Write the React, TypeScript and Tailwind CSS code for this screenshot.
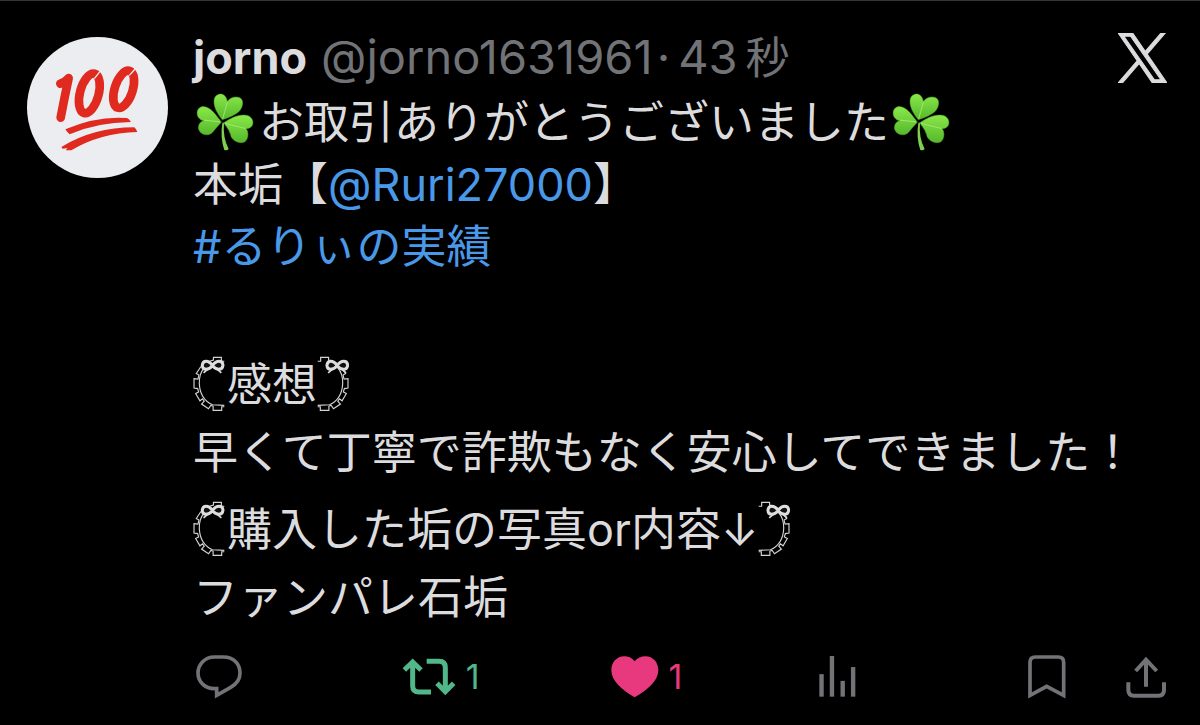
import React from 'react';

function HundredAvatar() {
  return (
    <svg viewBox="81 111 423 423" className="w-full" role="img" aria-label="💯">
      <g fill="none" stroke="#e0291f" strokeLinejoin="round">
        <path d="M181 251 Q195 247 206 234 Q194 290 182 353" strokeWidth="26" strokeLinecap="round" />
        <ellipse cx="268" cy="280" rx="28" ry="61" strokeWidth="26" transform="rotate(15 268 280)" />
        <ellipse cx="371" cy="268" rx="27" ry="58" strokeWidth="26" transform="rotate(18 371 268)" />
      </g>
      <g stroke="#ecedf1" strokeWidth="4" fill="none">
        <path d="M283 236 L302 212" />
        <path d="M388 226 L408 204" />
      </g>
      <g fill="#e0291f">
        <path d="M196 388 Q290 347 381 354 Q388 357 393 366 Q290 367 209 403 Q202 398 196 388Z" />
        <path d="M184 441 Q280 382 403 382 Q409 387 412 396 Q300 399 214 451 L198 451 Q198 446 203 444 L188 446Z" />
      </g>
    </svg>
  );
}

function Clover() {
  return (
    <svg viewBox="588 280 174 175" className="inline-block w-[58px] h-[58px] ml-[3px] mr-[5px] align-[-12px]" role="img" aria-label="☘️">
      <defs>
        <linearGradient id="leaf" x1="0" y1="0" x2="0" y2="1">
          <stop offset="0" stopColor="#8ae84a" />
          <stop offset="1" stopColor="#56b82b" />
        </linearGradient>
      </defs>
      <path d="M667 370 Q660 415 673 452 Q681 455 686 449 Q668 415 672 370Z" fill="#7fd052" />
      <g fill="url(#leaf)" stroke="#4da32a" strokeWidth="1.5">
        <path d="M667 361 C655 345 640 325 642 302 C644 283 664 278 674 288 Q681 295 682 305 C692 292 710 289 721 295 C733 302 729 325 716 337 Q700 350 667 361Z" />
        <path d="M664 368 C648 346 630 320 608 321 C590 323 586 345 597 356 Q602 362 610 364 C598 367 592 380 596 391 C603 409 627 410 637 399 Q650 383 664 368Z" />
        <path d="M671 370 C690 358 712 344 738 347 C757 349 764 368 756 380 Q748 389 739 388 C747 398 746 419 735 427 C721 434 702 427 694 413 Q690 393 671 370Z" />
      </g>
      <g stroke="#a9ee78" strokeWidth="3" fill="none" opacity="0.8">
        <path d="M668 358 L682 308" />
        <path d="M660 367 L612 362" />
        <path d="M675 372 L737 387" />
      </g>
    </svg>
  );
}

function RibbonBracket({ side }: { side: 'left' | 'right' }) {
  const right = side === 'right';
  return (
    <svg viewBox="40 48 97 170" className="inline-block w-[32px] h-[56px] mr-[2px] align-[-11px]" aria-hidden="true">
      <g fill="none" stroke="#d4d4d6" strokeWidth="3.5" transform={right ? 'translate(177 0) scale(-1 1)' : undefined}>
        <path d="M135 64 H126 V52 H102 V60 L83 66 L70 75 M64 80 L50 101 L58 106 L55 118 L43 117 V145 L54 147 L57 157 L48 162 L61 184 L69 178 L74 185 L66 194 L87 208 L94 198 L101 200 V213 H127 V202 H135" />
        <path d="M135 198 L99 196 C72 184 60 160 59 130 C59 108 65 94 74 84" />
      </g>
      <g transform={right ? 'translate(2 0)' : undefined}>
        <path d="M99 77 C87 59 70 60 68 76 C69 93 87 92 99 77 C111 59 130 60 131 76 C129 93 111 92 99 77Z" fill="#111111" stroke="#dedee0" strokeWidth="9" />
        <path d="M92 82 L72 99 M106 82 L126 99" stroke="#dedee0" strokeWidth="5" />
      </g>
    </svg>
  );
}

function XLogo() {
  return (
    <svg viewBox="0 0 1200 1227" className="w-[49px] h-[50px]" fill="#dcdcde" stroke="#dcdcde" strokeWidth="26" role="img" aria-label="X">
      <path d="M714.163 519.284L1160.89 0H1055.03L667.137 450.887L357.328 0H0L468.492 681.821L0 1226.37H105.866L515.491 750.218L842.672 1226.37H1200L714.137 519.284H714.163ZM569.165 687.828L521.697 619.934L144.011 79.6944H306.615L611.412 515.685L658.88 583.579L1055.08 1150.3H892.476L569.165 687.854V687.828Z" />
    </svg>
  );
}

function ReplyIcon() {
  return (
    <svg viewBox="48 44 138 132" className="w-[46px] h-[44px]" fill="none" stroke="currentColor" strokeWidth="11">
      <path d="M103 50 H131 C160 50 180 70 180 98 C180 118 168 132 152 141 L110 165 V145 H103 C75 145 54 124 54 98 S75 50 103 50Z" />
    </svg>
  );
}

function RetweetIcon() {
  return (
    <svg viewBox="657 55 162 114" className="w-[54px] h-[38px]" fill="none" stroke="currentColor" strokeWidth="15">
      <path d="M664 91 L689 67 L714 91 M689 68 V138 Q689 157 708 157 H744" />
      <path d="M731 65 H768 Q787 65 787 84 V155 M762 131 L787 156 L812 131" />
    </svg>
  );
}

function HeartIcon() {
  return (
    <svg viewBox="87 50 144 126" className="w-[48px] h-[42px]" fill="currentColor">
      <path d="M158 66 C150 55 138 51 127 51 C104 51 88 70 88 92 C88 125 120 152 158 174 C196 152 229 125 229 92 C229 70 213 51 190 51 C178 51 166 56 158 66Z" />
    </svg>
  );
}

function StatsIcon() {
  return (
    <svg viewBox="726 51 108 122" className="w-[37px] h-[41px]" fill="currentColor">
      <rect x="726" y="105" width="13" height="67" />
      <rect x="757" y="51" width="13" height="121" />
      <rect x="789" y="125" width="13" height="47" />
      <rect x="820" y="84" width="13" height="88" />
    </svg>
  );
}

function BookmarkIcon() {
  return (
    <svg viewBox="84 44 114 132" className="w-[38px] h-[44px]" fill="none" stroke="currentColor" strokeWidth="11">
      <path d="M90 165 V66 Q90 50 106 50 H175 Q191 50 191 66 V165 L140 138Z" />
    </svg>
  );
}

function ShareIcon() {
  return (
    <svg viewBox="378 46 123 126" className="w-[41px] h-[42px]" fill="none" stroke="currentColor" strokeWidth="12">
      <path d="M385 125 V148 Q385 165 402 165 H475 Q492 165 492 148 V125" />
      <path d="M438 138 V56 M407 91 L438 57 L470 91" />
    </svg>
  );
}

export default function App() {
  return (
    <div className="min-h-screen bg-black border-t border-[#333639] text-[#dcdcde] font-['Inter','Noto_Sans_CJK_JP',sans-serif]">
      <article lang="ja" className="flex gap-[25px] pl-[27px] pr-[33px] pt-[26px]">
        <div className="w-[141px] h-[141px] mt-[10px] shrink-0 rounded-full overflow-hidden bg-[#ecedf1]">
          <HundredAvatar />
        </div>

        <div className="flex-1 min-w-0">
          <header className="flex items-start justify-between h-[65px]">
            <div className="flex items-baseline text-[47px] leading-[60px] whitespace-nowrap text-[#717376]">
              <span className="text-[45px] font-bold text-[#dcdcde]">jorno</span>
              <span className="ml-[14px]">@jorno1631961</span>
              <span className="ml-1 mr-2">·</span>
              <time>
                43<span className="ml-2 text-[44px]">秒</span>
              </time>
            </div>
            <a href="#" aria-label="X" className="mt-[6px]">
              <XLogo />
            </a>
          </header>

          <div className="text-[45px] leading-[62px] whitespace-nowrap">
            <p className="h-[62px]">
              <Clover />
              お取引ありがとうございました
              <Clover />
            </p>
            <p>
              本垢【<a href="#" className="text-[#4a99e9]">@Ruri27000</a>】
            </p>
            <p className="mb-[61px]">
              <a href="#" className="text-[#4a99e9]">#るりぃの実績</a>
            </p>
            <p className="h-[83px] pt-[15px]">
              <RibbonBracket side="left" />感想<RibbonBracket side="right" />
            </p>
            <p>早くて丁寧で詐欺もなく安心してできました！</p>
            <p className="h-[83px] pt-[15px]">
              <RibbonBracket side="left" />購入した垢の写真or内容↓<RibbonBracket side="right" />
            </p>
            <p>ファンパレ石垢</p>
          </div>

          <footer className="grid grid-cols-[repeat(4,1fr)_auto] items-center mt-[22px] h-[50px] text-[34px] text-[#717376]">
            <button className="flex items-center pl-[3px]" aria-label="Reply">
              <ReplyIcon />
            </button>
            <button className="flex items-center gap-[10px] text-[#52b788]" aria-label="Repost">
              <RetweetIcon />
              <span>1</span>
            </button>
            <button className="flex items-center gap-[10px] text-[#e8397f]" aria-label="Like">
              <HeartIcon />
              <span>1</span>
            </button>
            <button className="flex items-center" aria-label="Views">
              <StatsIcon />
            </button>
            <div className="flex items-center justify-between gap-[60px]">
              <button aria-label="Bookmark">
                <BookmarkIcon />
              </button>
              <button aria-label="Share">
                <ShareIcon />
              </button>
            </div>
          </footer>
        </div>
      </article>
    </div>
  );
}
